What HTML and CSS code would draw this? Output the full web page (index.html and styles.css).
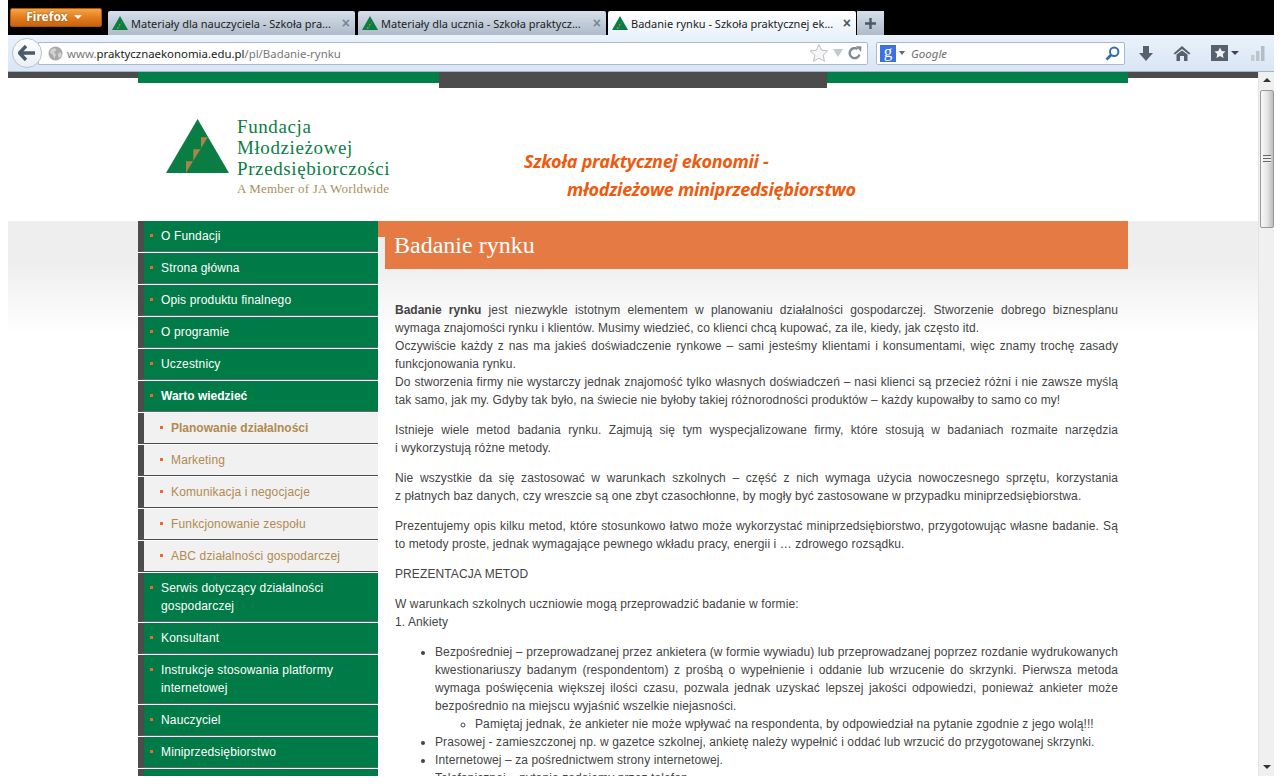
FILE: index.html
```html
<!DOCTYPE html>
<html lang="pl">
<head>
  <meta charset="utf-8">
  <title>Badanie rynku - Szkoła praktycznej ekonomii</title>
  <link rel="stylesheet" href="styles.css">
</head>
<body>

<div class="window">

  <!-- tabs -->
  <div class="tabbar">
    <div class="ff-btn">Firefox <span class="ff-caret"></span></div>
    <div class="tab">
      <svg class="fav" viewBox="0 0 16 14"><polygon points="8,0 16,14 0,14" fill="#0a7d45"/><polygon points="9,6 10,6 6,13 5,13 5,11 7,11 7,8 9,8" fill="#8f8a4a"/></svg>
      <span class="tab-title">Materiały dla nauczyciela - Szkoła pra...</span>
      <span class="tab-x">×</span>
    </div>
    <div class="tab tab2">
      <svg class="fav" viewBox="0 0 16 14"><polygon points="8,0 16,14 0,14" fill="#0a7d45"/><polygon points="9,6 10,6 6,13 5,13 5,11 7,11 7,8 9,8" fill="#8f8a4a"/></svg>
      <span class="tab-title">Materiały dla ucznia - Szkoła praktycz...</span>
      <span class="tab-x">×</span>
    </div>
    <div class="tab tab-active">
      <svg class="fav" viewBox="0 0 16 14"><polygon points="8,0 16,14 0,14" fill="#0a7d45"/><polygon points="9,6 10,6 6,13 5,13 5,11 7,11 7,8 9,8" fill="#8f8a4a"/></svg>
      <span class="tab-title">Badanie rynku - Szkoła praktycznej ek...</span>
      <span class="tab-x">×</span>
    </div>
    <div class="tab-new">
      <svg width="13" height="13" viewBox="0 0 13 13"><path d="M6.5 1v11M1 6.5h11" stroke="#4a5866" stroke-width="2.4" fill="none"/></svg>
    </div>
  </div>

  <!-- toolbar -->
  <div class="toolbar">
    <div class="back">
      <svg width="18" height="16" viewBox="0 0 18 16"><path d="M8 1 1.5 8 8 15M2 8h15" stroke="#4c5a69" stroke-width="3.4" fill="none"/></svg>
    </div>
    <div class="urlbar">
      <svg class="globe" width="15" height="15" viewBox="0 0 15 15"><circle cx="7.5" cy="7.5" r="7" fill="#a9a9a9"/><path d="M3 3.500 7 2l1.500 2L6 6.500l2 2-1.500 4L4 8 2 6.500zM10 7l3-.5.500 3-2.500 3-1-3z" fill="#d2d2d2"/></svg>
      <span class="url">www.<b>praktycznaekonomia.edu.pl</b>/pl/Badanie-rynku</span>
      <svg class="star" width="20" height="20" viewBox="0 0 20 20"><polygon points="10,1.500 12.600,7.200 18.800,7.900 14.200,12.100 15.500,18.300 10,15.200 4.500,18.300 5.800,12.100 1.200,7.900 7.400,7.200" fill="#f6f6f6" stroke="#b9bec4"/></svg>
      <span class="url-drop"></span>
      <svg width="14" height="14" viewBox="0 0 14 14"><path d="M11.500 8.500A5 5 0 1 1 9.500 3" stroke="#7f8a95" stroke-width="2.400" fill="none"/><polygon points="8,0 13.500,0.500 13,6" fill="#7f8a95"/></svg>
    </div>
    <div class="search">
      <div class="g-badge">g</div>
      <span class="mini-caret"></span>
      <span class="search-text">Google</span>
      <svg width="15" height="15" viewBox="0 0 15 15"><circle cx="9.200" cy="5.800" r="4.200" stroke="#2f6db0" stroke-width="2" fill="none"/><path d="M6 9 1.500 13.500" stroke="#2f6db0" stroke-width="2.600"/></svg>
    </div>
    <div class="tools">
      <svg width="16" height="17" viewBox="0 0 16 17"><path d="M5 1h6v7h4l-7 8-7-8h4z" fill="#56616c"/></svg>
      <svg width="18" height="16" viewBox="0 0 18 16"><path d="M9 1 .500 8.500 2 9.500 9 4l7 5.500 1.500-1z" fill="#56616c"/><path d="M3.500 9.500 9 5.500l5.500 4V16H11v-5H7v5H3.500z" fill="#56616c"/></svg>
      <span class="bm">
        <svg width="17" height="16" viewBox="0 0 17 16"><rect width="17" height="16" fill="#56616c"/><polygon points="9,2.500 10.700,6 14.500,6.500 11.800,9 12.500,13 9,11 5.500,13 6.200,9 3.500,6.500 7.300,6" fill="#eef2f6"/></svg>
        <span class="bm-caret"></span>
      </span>
      <svg class="bars" width="15" height="16" viewBox="0 0 15 16"><rect x="0" y="10" width="3.500" height="6" fill="#c3cad1"/><rect x="5" y="6" width="3.500" height="10" fill="#bcc4cc"/><rect x="10" y="1" width="3.500" height="15" fill="#b4bdc6"/></svg>
    </div>
  </div>

  <!-- page + scrollbar -->
  <div class="viewport">
    <div class="page">

      <div class="wrap topstrip">
        <div class="strip-green"></div>
        <div class="strip-dark"></div>
        <div class="strip-green"></div>
      </div>

      <div class="wrap header">
        <div class="logo">
          <svg class="logo-mark" width="63" height="54" viewBox="0 0 63 54">
            <polygon points="31.600,0 63,54 0,54" fill="#0a7d45"/>
            <polygon points="35,18.300 41.700,18.300 20,53.700 20,42.300 27.300,42.300 27.300,30.300 35,30.300" fill="#a8864a"/>
          </svg>
          <div class="logo-text">
            <div class="logo-name">Fundacja</div>
            <div class="logo-name">Młodzieżowej</div>
            <div class="logo-name">Przedsiębiorczości</div>
            <div class="logo-sub">A Member of JA Worldwide</div>
          </div>
        </div>
        <div class="slogan">
          <div>Szkoła praktycznej ekonomii -</div>
          <div class="slogan-2">młodzieżowe miniprzedsiębiorstwo</div>
        </div>
      </div>

      <div class="main-bg">
        <div class="wrap main">

          <ul class="menu">
            <li>O Fundacji</li>
            <li>Strona główna</li>
            <li>Opis produktu finalnego</li>
            <li>O programie</li>
            <li>Uczestnicy</li>
            <li class="current">Warto wiedzieć</li>
            <li class="sub current">Planowanie działalności</li>
            <li class="sub">Marketing</li>
            <li class="sub">Komunikacja i negocjacje</li>
            <li class="sub">Funkcjonowanie zespołu</li>
            <li class="sub">ABC działalności gospodarczej</li>
            <li>Serwis dotyczący działalności gospodarczej</li>
            <li>Konsultant</li>
            <li>Instrukcje stosowania platformy internetowej</li>
            <li>Nauczyciel</li>
            <li>Miniprzedsiębiorstwo</li>
            <li>&nbsp;</li>
          </ul>

          <div class="content">
            <h1>Badanie rynku</h1>
            <div class="text">
              <p><b>Badanie rynku</b> jest niezwykle istotnym elementem w planowaniu działalności gospodarczej. Stworzenie dobrego biznesplanu wymaga znajomości rynku i klientów. Musimy wiedzieć, co klienci chcą kupować, za ile, kiedy, jak często itd.<br>
              Oczywiście każdy z nas ma jakieś doświadczenie rynkowe – sami jesteśmy klientami i konsumentami, więc znamy trochę zasady funkcjonowania rynku.<br>
              Do stworzenia firmy nie wystarczy jednak znajomość tylko własnych doświadczeń – nasi klienci są przecież różni i nie zawsze myślą tak samo, jak my. Gdyby tak było, na świecie nie byłoby takiej różnorodności produktów – każdy kupowałby to samo co my!</p>
              <p>Istnieje wiele metod badania rynku. Zajmują się tym wyspecjalizowane firmy, które stosują w badaniach rozmaite narzędzia i&nbsp;wykorzystują różne metody.</p>
              <p>Nie wszystkie da się zastosować w warunkach szkolnych – część z nich wymaga użycia nowoczesnego sprzętu, korzystania z&nbsp;płatnych baz danych, czy wreszcie są one zbyt czasochłonne, by mogły być zastosowane w przypadku miniprzedsiębiorstwa.</p>
              <p>Prezentujemy opis kilku metod, które stosunkowo łatwo może wykorzystać miniprzedsiębiorstwo, przygotowując własne badanie. Są to metody proste, jednak wymagające pewnego wkładu pracy, energii i … zdrowego rozsądku.</p>
              <p>PREZENTACJA METOD</p>
              <p>W warunkach szkolnych uczniowie mogą przeprowadzić badanie w formie:<br>
              1. Ankiety</p>
              <ul>
                <li>Bezpośredniej – przeprowadzanej przez ankietera (w formie wywiadu) lub przeprowadzanej poprzez rozdanie wydrukowanych kwestionariuszy badanym (respondentom) z prośbą o wypełnienie i oddanie lub wrzucenie do skrzynki. Pierwsza metoda wymaga poświęcenia większej ilości czasu, pozwala jednak uzyskać lepszej jakości odpowiedzi, ponieważ ankieter może bezpośrednio na miejscu wyjaśnić wszelkie niejasności.
                  <ul>
                    <li>Pamiętaj jednak, że ankieter nie może wpływać na respondenta, by odpowiedział na pytanie zgodnie z jego wolą!!!</li>
                  </ul>
                </li>
                <li>Prasowej - zamieszczonej np. w gazetce szkolnej, ankietę należy wypełnić i oddać lub wrzucić do przygotowanej skrzynki.</li>
                <li>Internetowej – za pośrednictwem strony internetowej.</li>
                <li>Telefonicznej – pytania zadajemy przez telefon.</li>
              </ul>
            </div>
          </div>

        </div>
      </div>
    </div>

    <div class="scrollbar">
      <span class="sb-up"></span>
      <div class="sb-thumb"><span class="sb-grip"></span></div>
      <span class="sb-down"></span>
    </div>
  </div>
</div>

</body>
</html>
```

FILE: styles.css
```css
html, body {
  overflow: hidden;
}

body {
  margin: 0 8px;
  background: #fff;
  font-family: "Liberation Sans", Arial, sans-serif;
}

.window {
  width: 1266px;
  height: 776px;
  display: flex;
  flex-direction: column;
  overflow: hidden;
}

/* tabs */
.tabbar {
  height: 35px;
  flex: none;
  background: #000;
  display: flex;
  align-items: flex-end;
  padding-left: 2px;
  box-sizing: border-box;
}

.ff-btn {
  width: 92px;
  height: 19px;
  margin: 0 6px 8px 0;
  padding-right: 4px;
  box-sizing: border-box;
  background: linear-gradient(#f5a544, #e07a1c 55%, #c9620f);
  border: 1px solid #a9560f;
  border-radius: 2px;
  color: #fff;
  font: bold 12px "Noto Sans", sans-serif;
  line-height: 16px;
  text-align: center;
  text-shadow: 0 0 2px #8a4a0a;
}

.ff-caret {
  display: inline-block;
  margin: 0 0 2px 3px;
  border: 4px solid transparent;
  border-top: 4px solid #fff;
  border-bottom: 0;
}

.tab {
  width: 247px;
  height: 24px;
  margin-right: 3px;
  padding: 0 5px 0 4px;
  box-sizing: border-box;
  display: flex;
  align-items: center;
  background: linear-gradient(#d6dfe9, #aebbc9);
  font: 11px "Noto Sans", sans-serif;
  color: #1c1c1c;
  border-radius: 2px 2px 0 0;
}

.tab2 {
  width: 248px;
  margin-right: 2px;
}

.tab-active {
  width: 248px;
  margin-right: 1px;
  background: linear-gradient(#fff, #eaf2fb);
}

.fav {
  width: 16px;
  height: 14px;
  flex: none;
  margin-right: 3px;
}

.tab-title {
  flex: 1;
  white-space: nowrap;
  overflow: hidden;
}

.tab-x {
  color: #7a8794;
  font: bold 14px "Liberation Sans", sans-serif;
}

.tab-active .tab-x {
  color: #4a5560;
}

.tab-new {
  width: 27px;
  height: 24px;
  display: flex;
  align-items: center;
  justify-content: center;
  background: linear-gradient(#d6dfe9, #aebbc9);
}

/* toolbar */
.toolbar {
  height: 37px;
  flex: none;
  box-sizing: border-box;
  border-bottom: 1px solid #a4b4c6;
  background: linear-gradient(#eaf2fb, #d9e6f5);
  display: flex;
  align-items: center;
  padding-left: 4px;
}

.back {
  position: relative;
  z-index: 1;
  width: 30px;
  height: 30px;
  flex: none;
  box-sizing: border-box;
  border: 1px solid #b5c2d0;
  border-radius: 50%;
  background: linear-gradient(#fff, #e9eff6);
  display: flex;
  align-items: center;
  justify-content: center;
}

.urlbar {
  width: 830px;
  height: 23px;
  margin-left: -4px;
  padding: 0 5px 0 9px;
  box-sizing: border-box;
  flex: none;
  background: #fff;
  border: 1px solid #a9b9cf;
  border-radius: 0 2px 2px 0;
  display: flex;
  align-items: center;
}

.globe {
  flex: none;
  margin-right: 4px;
}

.url {
  flex: 1;
  color: #777;
  font: 11.4px "Noto Sans", sans-serif;
}

.url b {
  color: #1a1a1a;
  font-weight: normal;
}

.star {
  margin-right: 4px;
}

.url-drop {
  margin-right: 5px;
  border: 5px solid transparent;
  border-top: 8px solid #c2c9d0;
  border-bottom: 0;
}

.search {
  width: 249px;
  height: 23px;
  margin-left: 8px;
  padding: 0 4px 0 3px;
  box-sizing: border-box;
  flex: none;
  background: #fff;
  border: 1px solid #a9b9cf;
  border-radius: 2px;
  display: flex;
  align-items: center;
}

.g-badge {
  width: 16px;
  height: 17px;
  flex: none;
  background: #3b72e0;
  color: #fff;
  font: 17px/13px "Liberation Serif", serif;
  text-align: center;
}

.mini-caret {
  margin: 0 6px 0 3px;
  border: 3px solid transparent;
  border-top: 4px solid #666;
  border-bottom: 0;
}

.search-text {
  flex: 1;
  color: #6f6f6f;
  font: italic 11.5px "Noto Sans", sans-serif;
}

.tools {
  display: flex;
  align-items: center;
  gap: 19px;
  margin-left: 13px;
}

.bm {
  display: flex;
  align-items: center;
  gap: 3px;
  margin-left: 1px;
}

.bm-caret {
  border: 4px solid transparent;
  border-top: 4px solid #3c4650;
  border-bottom: 0;
}

.bars {
  margin-left: -7px;
}

/* page */
.viewport {
  flex: 1;
  min-height: 0;
  display: flex;
}

.page {
  width: 1250px;
  flex: none;
  overflow: hidden;
  background: linear-gradient(#4c4c4c, #4c4c4c) top / 100% 6px no-repeat #fff;
}

.wrap {
  width: 990px;
  margin: 0 auto;
}

.topstrip {
  display: flex;
  align-items: flex-start;
}

.strip-green {
  width: 301px;
  height: 11px;
  background: #008048;
}

.strip-dark {
  width: 388px;
  height: 16px;
  background: #4c4c4c;
}

/* header */
.header {
  height: 133px;
  display: flex;
  align-items: flex-start;
}

.logo {
  display: flex;
  align-items: flex-start;
  gap: 8px;
  margin: 28px 0 0 28px;
  width: 223px;
  flex: none;
}

.logo-mark {
  flex: none;
  margin-top: 3px;
}

.logo-text {
  color: #0a7d45;
  font-family: "Liberation Serif", serif;
  white-space: nowrap;
}

.logo-name {
  font-size: 19px;
  line-height: 21px;
  letter-spacing: 0.6px;
}

.logo-sub {
  margin-top: 3px;
  font-size: 13px;
  line-height: 14px;
  letter-spacing: 0.2px;
  color: #a98f5d;
}

.slogan {
  margin: 59px 0 0 135px;
  color: #ee5a0e;
  font: italic bold 18px/28px "Open Sans", sans-serif;
  letter-spacing: -0.3px;
  white-space: nowrap;
}

.slogan-2 {
  margin-left: 43px;
}

/* main */
.main-bg {
  background: linear-gradient(#eee, #eee 40px, #fff 115px);
}

.main {
  display: flex;
  align-items: flex-start;
}

.menu {
  width: 240px;
  flex: none;
  margin: 0;
  padding: 0;
  list-style: none;
  font-size: 12px;
  line-height: 18px;
  letter-spacing: 0.15px;
}

.menu li {
  position: relative;
  padding: 6px 10px 6px 17px;
  background: #007a46;
  border-left: 6px solid #4c4c4c;
  border-bottom: 1px solid #5b6b62;
  box-shadow: 0 1px 0 #fff;
  margin-bottom: 1px;
  color: #fff;
}

.menu li::before {
  content: "";
  position: absolute;
  left: 6px;
  top: 13px;
  width: 3px;
  height: 3px;
  background: #ee6a2c;
}

.menu li.current {
  font-weight: bold;
  letter-spacing: 0;
}

.menu li.sub {
  padding-left: 27px;
  background: #f1f1f1;
  border-bottom-color: #4c4c4c;
  color: #b08a50;
}

.menu li.sub::before {
  left: 16px;
}

.content {
  width: 750px;
  flex: none;
  border-top: 16px solid #e57a45;
}

.content h1 {
  margin: 0 0 0 7px;
  height: 32px;
  padding-left: 9px;
  background: #e57a45;
  color: #fff;
  font: normal 24px/16px "Liberation Serif", serif;
}

.text {
  padding: 32px 10px 0 17px;
  color: #444;
  font-size: 12px;
  line-height: 18px;
  letter-spacing: 0.1px;
  text-align: justify;
}

.text b {
  letter-spacing: 0;
}

.text p {
  margin: 0 0 12px;
}

.text ul {
  margin: 0;
  padding-left: 40px;
}

/* scrollbar */
.scrollbar {
  width: 16px;
  flex: none;
  box-sizing: border-box;
  border-left: 1px solid #e4e4e4;
  background: #f0f0f0;
  display: flex;
  flex-direction: column;
  align-items: center;
}

.sb-up {
  margin: 6px 0 8px;
  border: 4px solid transparent;
  border-bottom: 4px solid #333;
  border-top: 0;
}

.sb-thumb {
  width: 14px;
  height: 138px;
  box-sizing: border-box;
  border: 1px solid #999;
  border-radius: 2px;
  background: linear-gradient(to right, #f8f8f8, #e6e6e6 50%, #bdbdbd);
  display: flex;
  align-items: center;
  justify-content: center;
}

.sb-grip {
  width: 8px;
  height: 8px;
  background: repeating-linear-gradient(#666 0 1px, #eee 1px 3px);
}

.sb-down {
  margin: auto 0 7px;
  border: 4px solid transparent;
  border-top: 4px solid #333;
  border-bottom: 0;
}
```
